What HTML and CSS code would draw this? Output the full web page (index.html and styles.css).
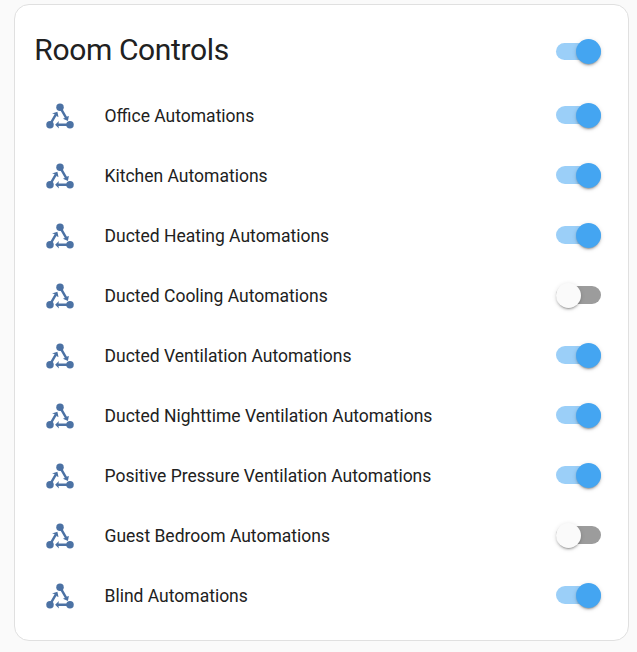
FILE: index.html
```html
<!DOCTYPE html>
<html lang="en">
<head>
<meta charset="utf-8">
<title>Room Controls</title>
<link rel="stylesheet" href="styles.css">
</head>
<body>
<svg class="defs" aria-hidden="true">
  <symbol id="automation" viewBox="0 0 30 30">
    <g fill="currentColor">
      <circle cx="15" cy="6.2" r="3.75"/>
      <circle cx="5" cy="23.7" r="3.75"/>
      <circle cx="25" cy="23.7" r="3.75"/>
      <path d="M7 12.4 12.4 10.7 13.5 16 11.6 15.2 11 13.8 9.3 12.9zM17.9 17.7 19.7 17.1 21.4 17.1 22.2 15.6 23.9 14.9 22.9 20.1zM10.1 23.7 14 20 13.5 22.2V25.2L14 27.4z"/>
      <path d="M5 23.7 11.2 12.9M15 6.2 21.6 17.7M25 23.7H12" fill="none" stroke="currentColor" stroke-width="2.4"/>
    </g>
  </symbol>
</svg>
<main class="card">
  <header class="header"><h1 class="title">Room Controls</h1><span class="switch on header-switch"></span></header>
  <div class="rows">
    <div class="row"><svg class="icon"><use href="#automation"/></svg><span class="name">Office Automations</span><span class="switch on"></span></div>
    <div class="row"><svg class="icon"><use href="#automation"/></svg><span class="name">Kitchen Automations</span><span class="switch on"></span></div>
    <div class="row"><svg class="icon"><use href="#automation"/></svg><span class="name">Ducted Heating Automations</span><span class="switch on"></span></div>
    <div class="row"><svg class="icon"><use href="#automation"/></svg><span class="name">Ducted Cooling Automations</span><span class="switch"></span></div>
    <div class="row"><svg class="icon"><use href="#automation"/></svg><span class="name">Ducted Ventilation Automations</span><span class="switch on"></span></div>
    <div class="row"><svg class="icon"><use href="#automation"/></svg><span class="name">Ducted Nighttime Ventilation Automations</span><span class="switch on"></span></div>
    <div class="row"><svg class="icon"><use href="#automation"/></svg><span class="name">Positive Pressure Ventilation Automations</span><span class="switch on"></span></div>
    <div class="row"><svg class="icon"><use href="#automation"/></svg><span class="name">Guest Bedroom Automations</span><span class="switch"></span></div>
    <div class="row"><svg class="icon"><use href="#automation"/></svg><span class="name">Blind Automations</span><span class="switch on"></span></div>
  </div>
</main>
</body>
</html>
```
FILE: styles.css
```css
* { box-sizing: border-box; }
body {
  margin: 0;
  padding: 4px 8px 0 14px;
  background: #fafafa;
  color: #212121;
  font-family: Roboto, "Liberation Sans", sans-serif;
  overflow: hidden;
}
.defs { display: none; }
.card {
  height: 637px;
  background: #fff;
  border: 1px solid #e0e0e0;
  border-radius: 15px;
}
.header {
  display: flex;
  justify-content: space-between;
  height: 85px;
  padding: 20px 27px 0 19.3px;
}
.title {
  margin: 0;
  font-size: 30px;
  line-height: 50px;
  font-weight: 400;
  letter-spacing: -0.36px;
}
.rows {
  display: grid;
  gap: 10px;
}
.row {
  display: flex;
  align-items: center;
  height: 50px;
  padding: 0 27px 0 30px;
}
.icon {
  width: 30px;
  height: 30px;
  margin-top: 2px;
  color: #4c72a4;
}
.name {
  flex: 1;
  margin-left: 29.5px;
  padding-top: 2px;
  font-size: 17.5px;
  line-height: 25px;
}
.switch {
  display: flex;
  align-items: center;
  width: 45px;
  height: 18px;
  border-radius: 9px;
  background: #9c9c9c;
}
.switch::before {
  content: "";
  width: 25px;
  height: 25px;
  flex: none;
  border-radius: 50%;
  background: #fafafa;
  box-shadow: 0 3px 1px -2px rgba(0,0,0,.2), 0 2px 2px rgba(0,0,0,.14), 0 1px 5px rgba(0,0,0,.12);
}
.switch.on {
  justify-content: flex-end;
  background: #9bcff8;
}
.switch.on::before { background: #44a5f1; }
.header-switch {
  height: 17px;
  margin-top: 18px;
}
```
